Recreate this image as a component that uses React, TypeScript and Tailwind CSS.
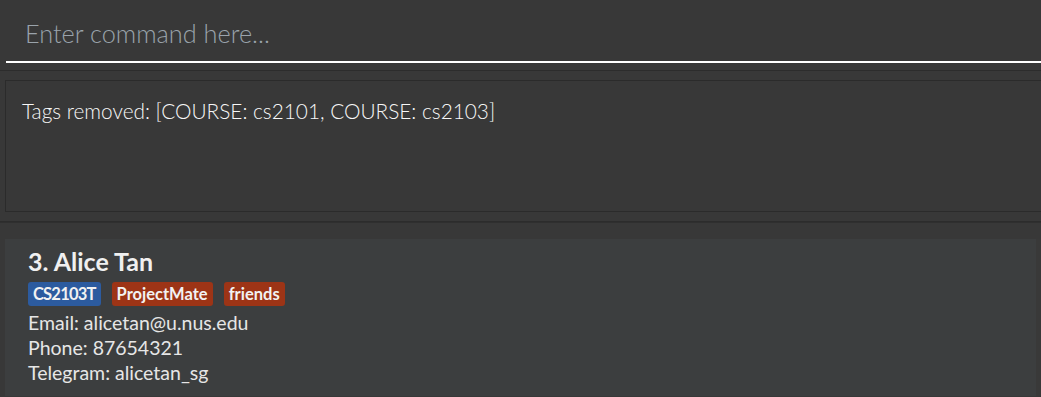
export default function App() {
  return (
    <div
      className="w-[1041px] h-[397px] overflow-hidden bg-[#383838] text-white"
      style={{ fontFamily: 'Lato, "Open Sans", sans-serif' }}
    >
      {/* command box */}
      <div className="h-[71px] pl-[6px] border-b border-[#2c2c2c]">
        <div className="h-[63px] border-b-2 border-white pl-[19px] pt-[18px]">
          <div className="text-[25.3px] font-light text-[#9aa3ab] leading-[30px]">Enter command here...</div>
        </div>
      </div>

      {/* result display */}
      <div className="h-[151px] pt-[9px] pl-[5px] border-b border-[#2c2c2c]">
        <div className="h-[132px] border border-r-0 border-[#2b2b2b] pl-[16px] pt-[15px]">
          <p className="text-[20.8px] font-light text-[#f7f7f7] leading-[30px]">
            Tags removed: [COURSE: cs2101, COURSE: cs2103]
          </p>
        </div>
      </div>

      {/* person list */}
      <div className="flex pt-[16px] pl-[5px] border-t border-[#2f2f2f]">
        <div className="w-[1031px] h-[157px] bg-[#3c3e3f] pl-[23px] pt-[7px]">
          <div className="text-[25px] font-bold text-[#f0f0f0] leading-[30px]">3. Alice Tan</div>
          <div className="flex gap-[11px] mt-[6px]">
            <span className="bg-[#2c5b9f] text-[#f2f2f2] text-[16.5px] font-bold px-[5px] rounded-[3px] leading-[24px] tracking-[-0.8px]">
              CS2103T
            </span>
            <span className="bg-[#9d3416] text-[#f2f2f2] text-[16.5px] font-bold px-[5px] rounded-[3px] leading-[24px]">
              ProjectMate
            </span>
            <span className="bg-[#9d3416] text-[#f2f2f2] text-[16.5px] font-bold px-[5px] rounded-[3px] leading-[24px]">
              friends
            </span>
          </div>
          <div className="text-[19.5px] text-[#e6e6e6] leading-[25px] mt-[4px]">
            <div>Email: alicetan@u.nus.edu</div>
            <div>Phone: 87654321</div>
            <div>Telegram: alicetan_sg</div>
          </div>
        </div>
        <div className="flex-1 bg-[#393939]" />
      </div>
    </div>
  )
}
